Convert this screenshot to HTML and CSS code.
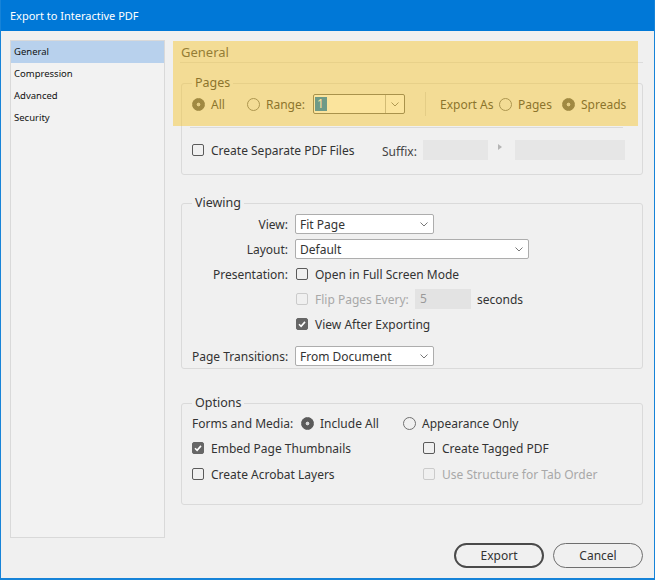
FILE: index.html
```html
<!DOCTYPE html>
<html>
<head>
<meta charset="utf-8">
<title>Export to Interactive PDF</title>
<link rel="stylesheet" href="styles.css">
</head>
<body>
<div class="window">
  <div class="titlebar">Export to Interactive PDF</div>
  <div class="content">
    <ul class="sidebar">
      <li class="sel">General</li>
      <li>Compression</li>
      <li>Advanced</li>
      <li>Security</li>
    </ul>
    <div class="main">
      <div class="head">General</div>

      <fieldset class="group pages">
        <legend>Pages</legend>
        <div class="row pages-row">
          <label class="radio on w55"><span class="rb"></span>All</label>
          <label class="radio w66"><span class="rb"></span>Range:</label>
          <div class="combo">
            <div class="val"><span class="selText">1</span></div>
            <div class="arrow"><svg width="8" height="5" viewBox="0 0 8 5"><path d="M0.5 0.5 L4 4 L7.5 0.5" fill="none" stroke="#777"/></svg></div>
          </div>
          <span class="vsep"></span>
          <span class="w59">Export As</span>
          <label class="radio w63"><span class="rb"></span>Pages</label>
          <label class="radio on"><span class="rb"></span>Spreads</label>
        </div>
        <div class="hr"></div>
        <div class="row suffix-row">
          <label class="check w190"><span class="cb"></span>Create Separate PDF Files</label>
          <span class="w41 suffix-label">Suffix:</span>
          <span class="field f65"></span>
          <span class="tri"></span>
          <span class="field f110"></span>
        </div>
      </fieldset>

      <fieldset class="group viewing">
        <legend>Viewing</legend>
        <div class="form-grid">
          <span class="lbl">View:</span>
          <div class="select s139"><span>Fit Page</span><svg width="8" height="5" viewBox="0 0 8 5"><path d="M0.5 0.5 L4 4 L7.5 0.5" fill="none" stroke="#777"/></svg></div>

          <span class="lbl">Layout:</span>
          <div class="select s234"><span>Default</span><svg width="8" height="5" viewBox="0 0 8 5"><path d="M0.5 0.5 L4 4 L7.5 0.5" fill="none" stroke="#777"/></svg></div>

          <span class="lbl">Presentation:</span>
          <label class="check"><span class="cb"></span>Open in Full Screen Mode</label>

          <span></span>
          <div class="row">
            <label class="check disabled w119"><span class="cb"></span>Flip Pages Every:</label>
            <span class="field num">5</span>
            <span class="secs">seconds</span>
          </div>

          <span></span>
          <label class="check checked"><span class="cb"><svg width="10" height="10" viewBox="0 0 10 10"><path d="M2 5.2 L4.1 7.3 L8 2.9" fill="none" stroke="#fff" stroke-width="1.6"/></svg></span>View After Exporting</label>

          <span class="lbl trans">Page Transitions:</span>
          <div class="select s139 trans"><span>From Document</span><svg width="8" height="5" viewBox="0 0 8 5"><path d="M0.5 0.5 L4 4 L7.5 0.5" fill="none" stroke="#777"/></svg></div>
        </div>
      </fieldset>

      <fieldset class="group options">
        <legend>Options</legend>
        <div class="row forms-row">
          <span class="w109">Forms and Media:</span>
          <label class="radio on w102"><span class="rb"></span>Include All</label>
          <label class="radio"><span class="rb"></span>Appearance Only</label>
        </div>
        <div class="opt-grid">
          <label class="check checked"><span class="cb"><svg width="10" height="10" viewBox="0 0 10 10"><path d="M2 5.2 L4.1 7.3 L8 2.9" fill="none" stroke="#fff" stroke-width="1.6"/></svg></span>Embed Page Thumbnails</label>
          <label class="check"><span class="cb"></span>Create Tagged PDF</label>
          <label class="check"><span class="cb"></span>Create Acrobat Layers</label>
          <label class="check disabled"><span class="cb"></span>Use Structure for Tab Order</label>
        </div>
      </fieldset>

      <div class="buttons">
        <button class="btn primary">Export</button>
        <button class="btn">Cancel</button>
      </div>

      <div class="highlight"></div>
    </div>
  </div>
</div>
</body>
</html>
```
FILE: styles.css
```css
* { box-sizing: border-box; }
html, body { margin: 0; padding: 0; }
body {
  width: 655px;
  height: 580px;
  overflow: hidden;
  background: #f0f0f0;
  font-family: "Noto Sans", "Open Sans", sans-serif;
  font-size: 12px;
  color: #333;
}
.window {
  width: 655px;
  height: 580px;
  border: 1px solid #1683d8;
  border-top: none;
  border-bottom-width: 2px;
  background: #f0f0f0;
  display: flex;
  flex-direction: column;
}
.titlebar {
  height: 31px;
  background: #0078d7;
  color: #fff;
  font-size: 11px;
  line-height: 31px;
  padding-left: 9px;
  flex: none;
}
.content {
  display: flex;
  padding: 9px 10px 0 9px;
}
.sidebar {
  width: 155px;
  height: 498px;
  margin: 0;
  padding: 0;
  list-style: none;
  border: 1px solid #d9d9d9;
  background: #f2f2f2;
  font-size: 9.5px;
  color: #111;
  flex: none;
}
.sidebar li {
  height: 22px;
  line-height: 22px;
  padding-left: 3px;
}
.sidebar li.sel { background: #b8d1ed; }

.main {
  position: relative;
  margin-left: 16px;
  width: 462px;
  display: flex;
  flex-direction: column;
}
.highlight {
  position: absolute;
  left: -8px;
  top: 1px;
  width: 465px;
  height: 85px;
  background: rgba(247, 196, 38, 0.45);
  pointer-events: none;
}
.head {
  height: 23px;
  line-height: 24px;
  font-size: 13px;
  color: #444;
  border-bottom: 1px solid #dcdcdc;
  margin-left: -1px;
  padding-left: 1px;
}

fieldset.group {
  border: 1px solid #dadada;
  border-radius: 3px;
  margin: 0;
  padding: 0 10px;
  min-width: 0;
}
fieldset.group legend {
  padding: 0 3px;
  line-height: 16px;
  font-size: 12.5px;
  color: #333;
}
.row {
  display: flex;
  align-items: center;
  height: 20px;
}
.radio, .check {
  display: flex;
  align-items: center;
  gap: 6px;
  white-space: nowrap;
}
.check { gap: 7px; }
.rb {
  width: 13px;
  height: 13px;
  border-radius: 50%;
  border: 1px solid #707070;
  flex: none;
}
.radio.on .rb {
  border-color: #5a5a5a;
  background: radial-gradient(circle, #d4d4d4 0 1.6px, #5a5a5a 2.2px);
}
.cb {
  width: 12px;
  height: 12px;
  border: 1px solid #5a5a5a;
  border-radius: 2px;
  flex: none;
  display: flex;
  align-items: center;
  justify-content: center;
}
.check.checked .cb { background: #666; border-color: #666; }
.check.disabled { color: #a8a8a8; }
.check.disabled .cb { border-color: #cbcbcb; }

.w55 { width: 55px; }
.w66 { width: 66px; }
.w59 { width: 59px; white-space: nowrap; }
.w63 { width: 63px; }
.w190 { width: 190px; }
.w41 { width: 41px; }
.w119 { width: 119px; }
.w109 { width: 109px; white-space: nowrap; }
.w102 { width: 102px; }

/* Pages group */
fieldset.group.pages { margin-top: 12px; padding-bottom: 14px; }
.pages-row { height: 22px; margin-top: 2px; }
.combo {
  width: 92px;
  height: 20px;
  border: 1px solid #6b6b6b;
  border-radius: 2px;
  background: #fff;
  display: flex;
  flex: none;
}
.combo .val {
  flex: 1;
  display: flex;
  align-items: center;
  padding-left: 1px;
}
.selText {
  background: #0078d7;
  color: #fff;
  line-height: 14px;
  padding: 0 3px 0 2px;
}
.combo .arrow {
  width: 19px;
  border-left: 1px solid #b5b5b5;
  display: flex;
  align-items: center;
  justify-content: center;
}
.vsep {
  width: 1px;
  height: 24px;
  background: #d6d6d6;
  margin: 0 14px 0 20px;
  flex: none;
}
.hr {
  height: 1px;
  background: #dadada;
  margin: 12px 9px 0 -2px;
}
.suffix-row { margin-top: 12px; }
.suffix-label { padding-top: 3px; color: #444; }
.field {
  height: 20px;
  background: #e6e6e6;
  flex: none;
}
.f65 { width: 65px; }
.f110 { width: 110px; margin-left: 13px; }
.tri {
  width: 0;
  height: 0;
  border-left: 4px solid #b5b5b5;
  border-top: 3.5px solid transparent;
  border-bottom: 3.5px solid transparent;
  margin: -7px 0 0 10px;
}

/* Viewing group */
fieldset.group.viewing { margin-top: 20px; padding-bottom: 9px; }
.form-grid {
  display: grid;
  grid-template-columns: 96px 1fr;
  column-gap: 7px;
  row-gap: 5px;
  grid-auto-rows: 20px;
  align-items: center;
  margin-top: 3px;
}
.lbl { text-align: right; white-space: nowrap; }
.form-grid .trans { margin-top: 14px; }
.select {
  height: 20px;
  border: 1px solid #adadad;
  border-radius: 2px;
  background: #fff;
  display: flex;
  align-items: center;
  justify-content: space-between;
  padding: 0 5px 0 4px;
}
.s139 { width: 139px; }
.s234 { width: 234px; }
.form-grid .check { margin-left: 1px; }
.num {
  width: 56px;
  background: #e3e3e3;
  color: #999;
  padding-left: 5px;
  line-height: 20px;
}
.secs { margin-left: 6px; }

/* Options group */
fieldset.group.options { margin-top: 26px; padding-bottom: 20px; }
.forms-row { margin-top: 2px; }
.opt-grid {
  display: grid;
  grid-template-columns: 231px auto;
  grid-auto-rows: 20px;
  row-gap: 6px;
  margin-top: 5px;
  align-items: center;
}

.buttons {
  display: flex;
  justify-content: flex-end;
  gap: 9px;
  margin-top: 38px;
}
.btn {
  width: 90px;
  height: 25px;
  border-radius: 13px;
  border: 1px solid #6e6e6e;
  background: transparent;
  font-family: "Noto Sans", "Open Sans", sans-serif;
  font-size: 12px;
  color: #333;
  padding: 0;
}
.btn.primary { border: 2px solid #4a4a4a; }
```
